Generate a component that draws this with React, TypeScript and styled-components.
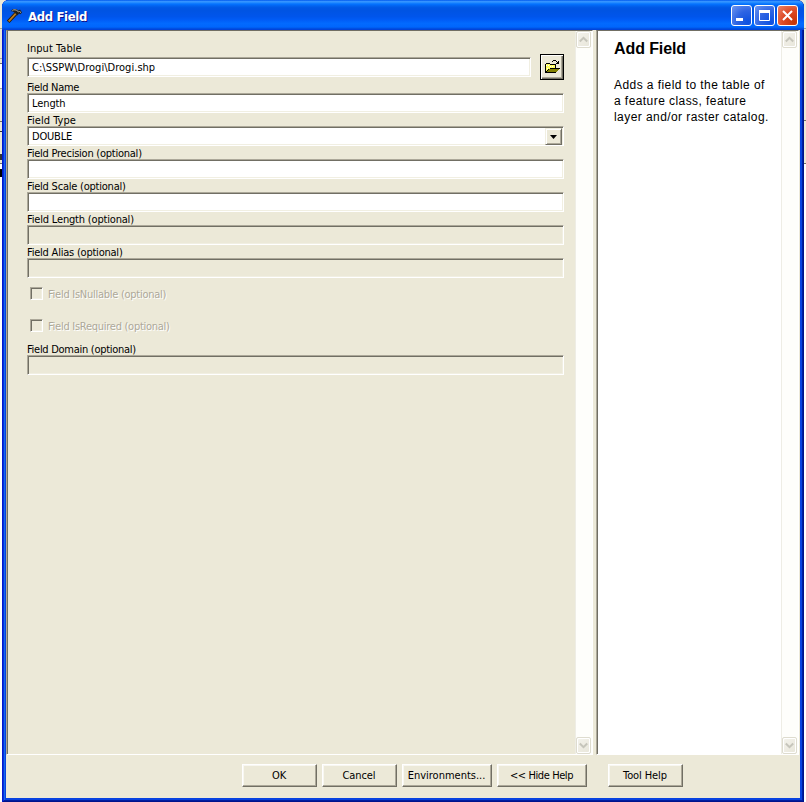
import React from 'react';
import styled, { createGlobalStyle } from 'styled-components';

const Global = createGlobalStyle`
  * { box-sizing: border-box; }
  body { margin: 0; overflow: hidden; background: #fff; }
`;
const ui = `"DejaVu Sans Condensed", "DejaVu Sans", sans-serif`;

const Desktop = styled.div`
  width: 806px; height: 802px; padding: 0 2px;
  background:
    linear-gradient(180deg, #ece9d8 28px, #aca899 28px 29px, #ece9d8 29px 58px, #aca899 58px 59px, #ece9d8 59px 63px, #716f64 63px 64px, #fff 64px 88px, #aca899 88px 89px, #ece9d8 89px 121px, #716f64 121px 122px, #ece9d8 122px 131px, #333 131px 132px, #ece9d8 132px 154px, #333 154px 160px, #ece9d8 160px 163px, #716f64 163px 164px, #fff 164px 169px, #000 169px 177px, #fff 177px) 0 0 / 2px 100% no-repeat,
    linear-gradient(180deg, #ece9d8 28px, #aca899 28px 29px, #ece9d8 29px 120px, #716f64 120px 121px, #ece9d8 121px 163px, #716f64 163px 164px, #fff 164px) 100% 0 / 3px 100% no-repeat,
    #ece9d8;
  font: 11px/13px ${ui};
  font-stretch: condensed;
  color: #000;
`;
const Window = styled.div`
  width: 802px; height: 802px;
  display: flex; flex-direction: column;
  border-radius: 7px 7px 0 0;
  padding: 0 4px 4px;
  background: #0842e0;
  box-shadow: inset 1px 0 #0019cf, inset -1px 0 #00138c, inset 0 -1px #00138c, inset 2px 0 #0831d9, inset -2px -2px #001ea0, inset 3px 0 #166aee;
`;
const TitleBar = styled.div`
  height: 30px; margin: 0 -4px; flex: none;
  padding: 1px 6px 0 5px;
  display: flex; align-items: center;
  border-radius: 7px 7px 0 0;
  background: linear-gradient(180deg, #0058ee 0%, #3593ff 5%, #288eff 8%, #127dff 11%, #036ffc 15%, #0262ee 20%, #0057e5 26%, #0054e3 35%, #0055eb 55%, #005bf5 65%, #026afe 78%, #0066fc 90%, #0050e2 95%, #003dd7 100%);
`;
const Title = styled.span`
  flex: 1; margin-left: 5px; padding-top: 2px;
  font: bold 13px/16px ${ui};
  font-stretch: condensed;
  letter-spacing: -0.35px;
  color: #fff; text-shadow: 1px 1px #0f1089;
`;
const CaptionButtons = styled.div`display: flex; gap: 2px;`;
const CaptionButton = styled.div<{ $close?: boolean }>`
  width: 21px; height: 21px;
  border: 1px solid #fff; border-radius: 3px;
  background: ${p => p.$close
    ? 'radial-gradient(circle at 85% 85%, #c63408 0%, #dd4a25 50%, #ec8468 100%)'
    : 'radial-gradient(circle at 85% 85%, #0c50e0 0%, #2e64e3 50%, #6f96f0 100%)'};
  svg { display: block; }
`;
const Client = styled.div`flex: 1; display: flex; flex-direction: column; background: #ece9d8;`;
const Panels = styled.div`height: 725px; display: flex; gap: 3px;`;
const Panel = styled.div<{ $width: number; $white?: boolean }>`
  width: ${p => p.$width}px; display: flex;
  background: ${p => (p.$white ? '#fff' : '#ece9d8')};
  border-top: 1px solid #716f64;
  border-left: 1px solid #aca899;
  border-right: 1px solid #fff;
  border-bottom: 1px solid #fff;
  box-shadow: inset 1px 0 #716f64;
`;
const Form = styled.div`flex: 1; padding: 10px 11px 0 20px;`;
const Label = styled.div<{ $track: number }>`
  height: 13px; white-space: nowrap;
  line-height: 15px;
  letter-spacing: ${p => p.$track}px;
`;
const InputRow = styled.div`height: 26px; display: flex; align-items: center; justify-content: space-between;`;
const Input = styled.div<{ $width?: number; $disabled?: boolean; $track?: number }>`
  width: ${p => p.$width ?? 537}px; height: 20px;
  display: flex; justify-content: space-between; align-items: center;
  padding-left: 4px; white-space: pre;
  letter-spacing: ${p => p.$track ?? -0.1}px;
  border: 1px solid;
  border-color: #aca899 #fff #fff #aca899;
  box-shadow: inset 1px 1px #716f64, inset -1px -1px #f1efe2;
  background: ${p => (p.$disabled ? '#ece9d8' : '#fff')};
`;
const DropButton = styled.div`
  width: 17px; height: 17px; margin: 1px 1px 0 0;
  display: flex; align-items: center; justify-content: center;
  background: #ece9d8;
  border: 1px solid; border-color: #f1efe2 #716f64 #716f64 #f1efe2;
  box-shadow: inset 1px 1px #fff, inset -1px -1px #aca899;
`;
const FolderButton = styled.div`
  width: 24px; height: 26px; padding: 3px 2px;
  background: #ece9d8; border: 1px solid #000;
  box-shadow: inset 1px 1px #fff, inset -1px -1px #716f64, inset -2px -2px #aca899;
`;
const Checks = styled.div`
  height: 64px; padding: 9px 0 0 3px;
  display: flex; flex-direction: column; gap: 19px;
`;
const CheckRow = styled.div`
  height: 13px;
  display: flex; gap: 5px;
  color: #aca899; text-shadow: 1px 1px #fff;
  letter-spacing: -0.27px; line-height: 15px;
`;
const CheckBox = styled.span`
  width: 13px; height: 13px;
  border: 1px solid; border-color: #aca899 #fff #fff #aca899;
  box-shadow: inset 1px 1px #716f64, inset -1px -1px #f1efe2;
`;
const ScrollTrack = styled.div`
  width: 17px; flex: none;
  display: flex; flex-direction: column; justify-content: space-between;
  background: #fefefb; border-left: 1px solid #eeede5;
`;
const ScrollButton = styled.div`
  height: 17px; margin-right: 1px;
  display: flex; align-items: center; justify-content: center;
  background: linear-gradient(135deg, #f4f3ec, #e8e6da);
  border: 1px solid #dedccf; border-radius: 2px;
  box-shadow: inset 1px 1px #fff, inset -1px -1px #fff;
`;
const Help = styled.div`
  flex: 1; padding: 9px 0 0 17px;
  font: 12px/16px "Liberation Sans", Arial, sans-serif;
  letter-spacing: 0.43px; white-space: nowrap;
`;
const HelpTitle = styled.h1`
  margin: 0 0 19px; font-size: 16px; line-height: 18px; font-weight: bold; letter-spacing: -0.1px;
`;
const Footer = styled.div`display: flex; gap: 5px; padding: 9px 0 0 236px;`;
const Button = styled.div<{ $width: number; $gap?: number; $track?: number }>`
  width: ${p => p.$width}px; height: 23px; margin-left: ${p => p.$gap ?? 0}px;
  padding-right: 1px;
  text-align: center; line-height: 21px; white-space: nowrap;
  letter-spacing: ${p => p.$track ?? -0.1}px;
  border: 1px solid; border-color: #fff #716f64 #716f64 #fff;
  box-shadow: inset -1px -1px #aca899, inset 1px 1px #f8f7f1;
`;

const Chevron = ({ down }: { down?: boolean }) => (
  <svg width="9" height="7" viewBox="0 0 9 7">
    <path d={down ? 'M.8 1.5 4.5 5.2 8.2 1.5' : 'M.8 5.5 4.5 1.8 8.2 5.5'} fill="none" stroke="#c6c5bb" strokeWidth="2" />
  </svg>
);
const Scroll = () => (
  <ScrollTrack>
    <ScrollButton><Chevron /></ScrollButton>
    <ScrollButton><Chevron down /></ScrollButton>
  </ScrollTrack>
);
const Hammer = () => (
  <svg width="16" height="16" viewBox="0 0 16 16">
    <path d="M1.2 13.8 9 5.6" stroke="#2a1800" strokeWidth="3.6" />
    <path d="M1.7 13.3 9 5.4" stroke="#b87c24" strokeWidth="1.8" />
    <path d="M3.6 3.2 6 1h3.4l2 1.4L13 1.4l2 3-1.6 1.8-1.4-.6-1.6 1.8L7.6 4.6 5.4 3.2Z" fill="#20201c" />
    <path d="m5.4 2.5 1.4-.7 2.4.2 2.6 2" stroke="#b4b4b0" fill="none" />
    <path d="m12.6 3.2 1 1.4" stroke="#d8d8d4" fill="none" />
  </svg>
);
const Folder = () => (
  <svg width="18" height="18" viewBox="0 0 18 18" shapeRendering="crispEdges">
    <path d="M2 15V6h1V5h4v1h6v4h4v1h-1v1h-1v1h-1v1h-1v1Z" fill="#000" />
    <path d="M3 13V6h4v1h5v3H7v1H5v1H4v1Z" fill="#ffff60" />
    <path d="M3 7h1v1H3zM5 7h1v1H5zM7 8h1v1H7zM9 8h1v1H9zM4 10h1v1H4z" fill="#fff" />
    <path d="M4 14v-1h1v-1h1v-1h10v1h-1v1h-1v1Z" fill="#848200" />
    <path d="M9 3h1v1H9zM10 2h3v1h-3zM13 3h1v1h-1zM14 4h1V3h1v3h-3V5h1z" fill="#000" />
  </svg>
);

export default function App() {
  return (
    <>
      <Global />
      <Desktop>
        <Window>
          <TitleBar>
            <Hammer />
            <Title>Add Field</Title>
            <CaptionButtons>
              <CaptionButton><svg width="19" height="19"><path d="M4 12h7v3H4z" fill="#fff" /></svg></CaptionButton>
              <CaptionButton><svg width="19" height="19"><path d="M4.5 5v9.5h10V5" fill="none" stroke="#fff" /><path d="M4 4h11v3H4z" fill="#fff" /></svg></CaptionButton>
              <CaptionButton $close><svg width="19" height="19"><path d="m5 5 9 9M14 5l-9 9" stroke="#fff" strokeWidth="2" /></svg></CaptionButton>
            </CaptionButtons>
          </TitleBar>
          <Client>
            <Panels>
              <Panel $width={587}>
                <Form>
                  <Label $track={0.05}>Input Table</Label>
                  <InputRow>
                    <Input $width={504} $track={0.03}>C:\SSPW\Drogi\Drogi.shp</Input>
                    <FolderButton><Folder /></FolderButton>
                  </InputRow>
                  <Label $track={-0.3}>Field Name</Label>
                  <Input>Length</Input>
                  <Label $track={0.05}>Field Type</Label>
                  <Input $track={-0.2}>DOUBLE<DropButton><svg width="7" height="4"><path d="M0 0h7L3.5 4Z" /></svg></DropButton></Input>
                  <Label $track={-0.24}>Field Precision (optional)</Label>
                  <Input />
                  <Label $track={-0.22}>Field Scale (optional)</Label>
                  <Input />
                  <Label $track={-0.18}>Field Length (optional)</Label>
                  <Input $disabled />
                  <Label $track={-0.22}>Field Alias (optional)</Label>
                  <Input $disabled />
                  <Checks>
                    <CheckRow><CheckBox />Field IsNullable (optional)</CheckRow>
                    <CheckRow><CheckBox />Field IsRequired (optional)</CheckRow>
                  </Checks>
                  <Label $track={-0.28}>Field Domain (optional)</Label>
                  <Input $disabled />
                </Form>
                <Scroll />
              </Panel>
              <Panel $width={203} $white>
                <Help>
                  <HelpTitle>Add Field</HelpTitle>
                  Adds a field to the table of<br />a feature class, feature<br />layer and/or raster catalog.
                </Help>
                <Scroll />
              </Panel>
            </Panels>
            <Footer>
              <Button $width={75}>OK</Button>
              <Button $width={75}>Cancel</Button>
              <Button $width={90} $track={0}>Environments...</Button>
              <Button $width={90} $track={-0.4}>&lt;&lt; Hide Help</Button>
              <Button $width={75} $gap={16}>Tool Help</Button>
            </Footer>
          </Client>
        </Window>
      </Desktop>
    </>
  );
}
